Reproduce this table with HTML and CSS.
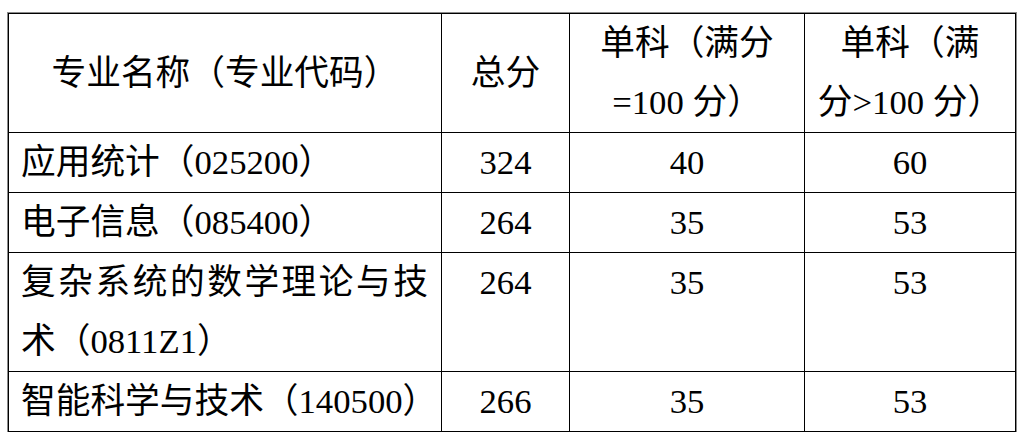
FILE: index.html
```html
<!DOCTYPE html>
<html lang="zh-CN">
<head>
<meta charset="utf-8">
<title>复试分数线</title>
<link rel="stylesheet" href="styles.css">
</head>
<body>
<table class="score-table">
  <colgroup>
    <col class="c-name">
    <col class="c-total">
    <col class="c-single">
    <col class="c-single-wide">
  </colgroup>
  <thead>
    <tr class="row-head">
      <th class="name-head">专业名称（专业代码）</th>
      <th>总分</th>
      <th>单科（满分<br>=100 分）</th>
      <th>单科（满<br>分&gt;100 分）</th>
    </tr>
  </thead>
  <tbody>
    <tr class="row-1">
      <td class="name">应用统计（025200）</td>
      <td>324</td>
      <td>40</td>
      <td>60</td>
    </tr>
    <tr class="row-1">
      <td class="name">电子信息（085400）</td>
      <td>264</td>
      <td>35</td>
      <td>53</td>
    </tr>
    <tr class="row-2">
      <td class="name">复杂系统的数学理论与技术（0811Z1）</td>
      <td>264</td>
      <td>35</td>
      <td>53</td>
    </tr>
    <tr class="row-last">
      <td class="name">智能科学与技术（140500）</td>
      <td>266</td>
      <td>35</td>
      <td>53</td>
    </tr>
  </tbody>
</table>
</body>
</html>
```

FILE: styles.css
```css
html, body {
  margin: 0;
  padding: 0;
  background: #ffffff;
}

body {
  padding: 13px 0 0 8px;
}

.score-table {
  border-collapse: collapse;
  table-layout: fixed;
  width: 1008px;
  font-family: "Liberation Serif", "Noto Sans CJK SC", serif;
  font-size: 34.7px;
  font-weight: 400;
  color: #000;
  border: 1px solid #000;
  box-shadow: 0 0 0 1px #8a8a8a;
}

.c-name { width: 433px; }
.c-total { width: 128px; }
.c-single { width: 235px; }
.c-single-wide { width: 211px; }

.score-table th,
.score-table td {
  border: 1px solid #000;
  padding: 0;
  line-height: 59px;
  text-align: center;
  font-weight: 400;
}

.score-table th {
  vertical-align: middle;
}

.score-table td {
  vertical-align: top;
}

.row-head { height: 118px; }
.row-1 { height: 60px; }
.row-2 { height: 118px; }
.row-last { height: 59px; }

.score-table td.name {
  text-align: justify;
  text-align-last: left;
  padding: 0 13px 0 12px;
}
```
